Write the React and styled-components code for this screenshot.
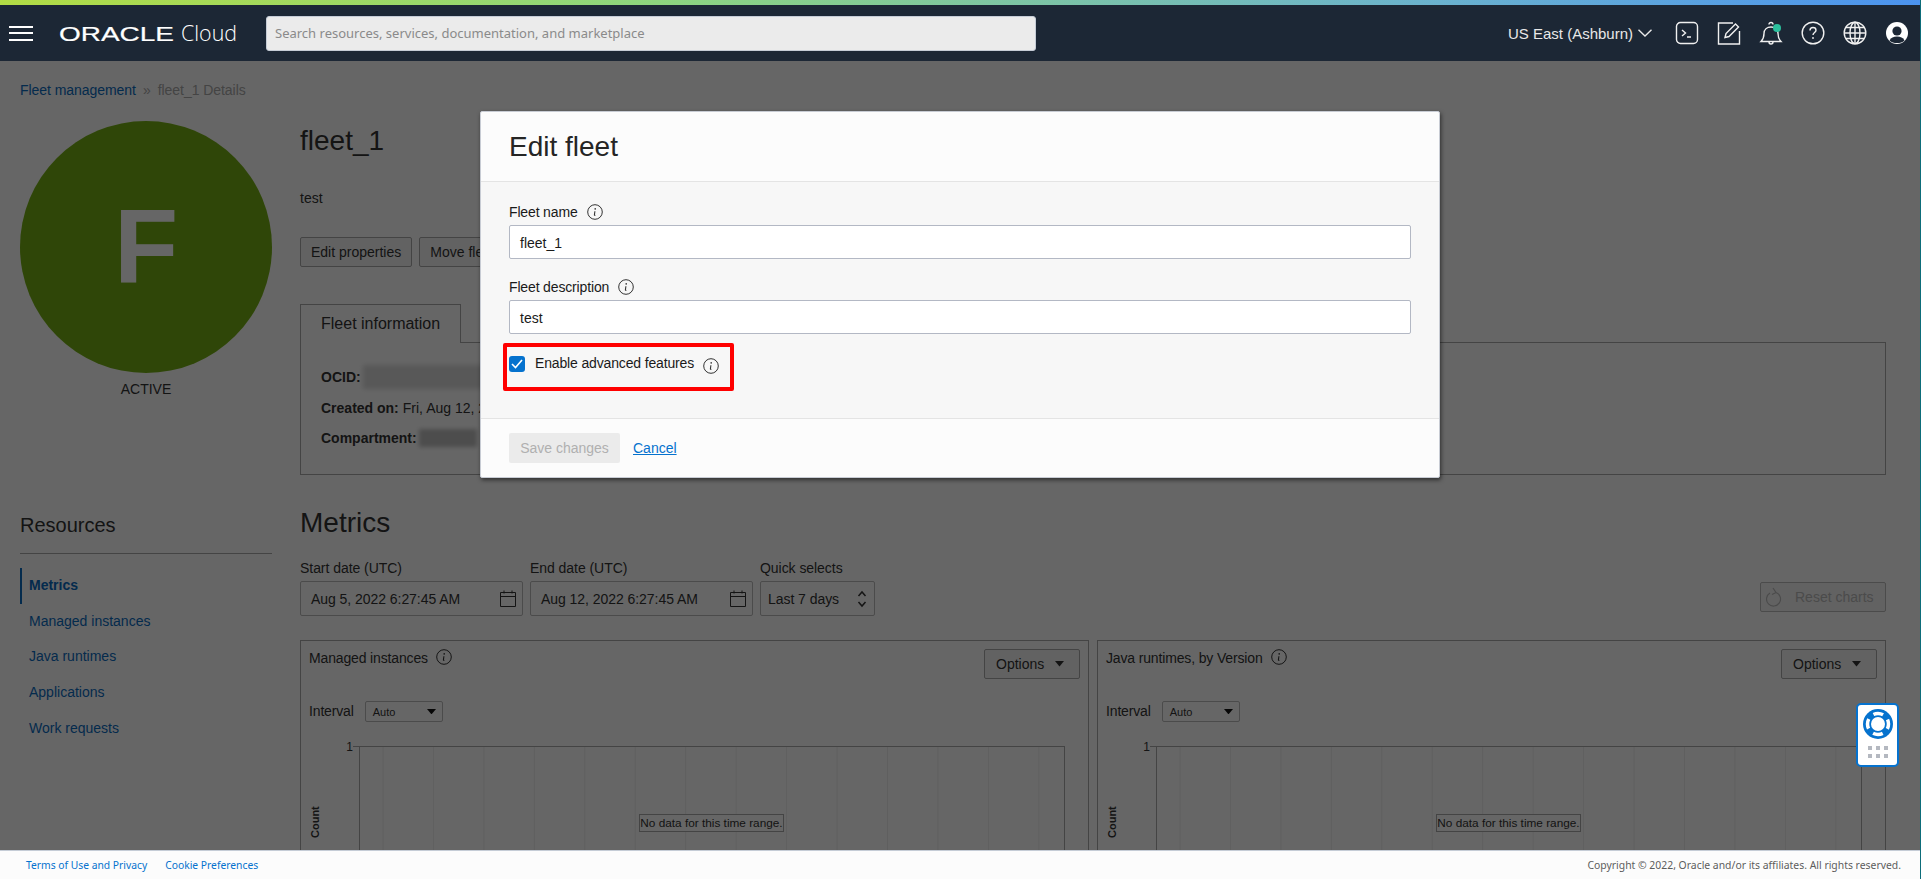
import styled, { createGlobalStyle } from 'styled-components';

const GlobalStyle = createGlobalStyle`
	html, body {
		margin: 0;
		padding: 0;
		height: 100%;
		overflow: hidden;
		background: #fff;
	}
	* {
		box-sizing: border-box;
	}
	body {
		font-family: "Liberation Sans", Arial, sans-serif;
		font-size: 14px;
		color: #333;
	}
`;

const Shell = styled.div`
	position: relative;
	display: flex;
	flex-direction: column;
	width: 100vw;
	height: 100vh;
	overflow: hidden;
	border-right: 1px solid #0d6d7a;
`;

const TopStripe = styled.div`
	height: 5px;
	flex: none;
	background: linear-gradient(90deg, #b2dc45 0%, #8fd67c 33%, #6ab2cf 75%, #4b93ef 100%);
`;

const Header = styled.header`
	display: flex;
	align-items: center;
	flex: none;
	height: 56px;
	padding: 0 11px 0 9px;
	background: #1c2735;
	color: #f0f0f0;
`;

const Burger = styled.div`
	display: flex;
	flex-direction: column;
	justify-content: space-between;
	width: 24px;
	height: 15px;
	margin-right: 27px;

	& > i {
		display: block;
		height: 2px;
		background: #fff;
	}
`;

const LogoText = styled.svg`
	display: block;
	flex: none;
	margin-right: 28px;
	overflow: visible;
`;

const Search = styled.div`
	display: flex;
	align-items: center;
	width: 770px;
	height: 35px;
	padding-left: 8px;
	background: #ebebeb;
	border: 1px solid #c5ccd6;
	border-radius: 3px;
	font-family: "Noto Sans", sans-serif;
	font-size: 13px;
	color: #8a8a8a;
`;

const Region = styled.div`
	display: flex;
	align-items: center;
	gap: 5px;
	margin-left: auto;
	margin-right: 23px;
	font-size: 15px;
	color: #e8e8e8;
`;

const NavIcon = styled.svg`
	display: block;
	flex: none;
	margin-left: ${p => (p.$first ? 0 : 18)}px;
	fill: none;
	stroke: #f0f0f0;
	stroke-width: 1.4;
`;

const Main = styled.main`
	position: relative;
	flex: 1;
	min-height: 0;
	overflow: hidden;
	padding: 19px 0 0 20px;
`;

const Crumbs = styled.div`
	display: flex;
	gap: 7px;
	letter-spacing: -0.05px;
	line-height: 20px;
	color: #aaa;
`;

const Link = styled.a`
	color: #0a6bc0;
	font-weight: ${p => (p.$active ? 700 : 400)};
`;

const Columns = styled.div`
	display: flex;
	gap: 28px;
	margin-top: 21px;
`;

const Aside = styled.aside`
	flex: none;
	width: 252px;
`;

const Avatar = styled.div`
	display: flex;
	align-items: center;
	justify-content: center;
	width: 252px;
	height: 252px;
	border-radius: 50%;
	background: #76b016;
	color: #fff;
	font-size: 105px;
	font-weight: 700;
`;

const Status = styled.div`
	margin-top: 8px;
	text-align: center;
	line-height: 16px;
`;

const SideTitle = styled.h3`
	margin: 116px 0 0;
	padding-bottom: 16px;
	border-bottom: 1px solid #aaa;
	font-size: 20px;
	font-weight: 400;
	line-height: 24px;
`;

const SideNav = styled.nav`
	display: flex;
	flex-direction: column;
	margin-top: 14px;
`;

const SideItem = styled.div`
	height: 35.7px;
	padding-left: 7px;
	line-height: 35.7px;
	border-left: 2px solid ${p => (p.$active ? '#0a6bc0' : 'transparent')};
`;

const Content = styled.div`
	flex: none;
	width: 1586px;
`;

const PageTitle = styled.h1`
	margin: 0;
	font-size: 28px;
	font-weight: 400;
	line-height: 40px;
`;

const Description = styled.p`
	margin: 27px 0 0;
	line-height: 20px;
`;

const ActionRow = styled.div`
	display: flex;
	gap: 7px;
	margin-top: 29px;
`;

const Button = styled.div`
	display: flex;
	align-items: center;
	height: 30px;
	padding: 0 10px;
	border: 1px solid #aaa;
	border-radius: 2px;
	background: #f5f5f5;
	color: #333;
	white-space: nowrap;
`;

const OptionsButton = styled(Button)`
	gap: 11px;
	width: 96px;
	padding: 0 0 0 11px;
`;

const ResetButton = styled(Button)`
	gap: 13px;
	width: 126px;
	margin-left: auto;
	margin-bottom: 4px;
	padding: 0 0 0 5px;
	border-color: #bbb;
	color: #bbb;
`;

const TabBar = styled.div`
	display: flex;
	height: 39px;
	margin-top: 37px;
`;

const Tab = styled.div`
	width: 161px;
	padding-left: 20px;
	border: 1px solid #aaa;
	border-bottom: 0;
	font-size: 16px;
	line-height: 38px;
`;

const TabLine = styled.div`
	flex: 1;
	border-bottom: 1px solid #aaa;
`;

const InfoPanel = styled.div`
	height: 132px;
	padding: 19px 20px 0;
	border: 1px solid #aaa;
	border-top: 0;
`;

const Fact = styled.div`
	display: flex;
	align-items: center;
	gap: 4px;
	height: 30.5px;

	& > b {
		font-weight: 700;
	}
`;

const Redacted = styled.span`
	display: inline-block;
	width: ${p => p.$w}px;
	height: ${p => p.$h}px;
	margin-left: -2px;
	background: ${p => p.$tone || '#ddd'};
	filter: blur(2px);
`;

const SectionTitle = styled.h2`
	margin: 28px 0 0;
	font-size: 28px;
	font-weight: 400;
	line-height: 40px;
`;

const FilterRow = styled.div`
	display: flex;
	align-items: flex-end;
	gap: 7px;
	margin-top: 15px;
`;

const Filter = styled.div`
	display: flex;
	flex-direction: column;
	width: ${p => p.$w}px;
	letter-spacing: -0.05px;

	& > label {
		line-height: 20px;
		margin-bottom: 3px;
	}
`;

const FilterBox = styled.div`
	display: flex;
	align-items: center;
	justify-content: space-between;
	height: 35px;
	padding: 0 5px 0 ${p => p.$left || 10}px;
	border: 1px solid #bbb;
	border-radius: 2px;
	background: #fff;
`;

const ChartGrid = styled.div`
	display: flex;
	gap: 8px;
	margin-top: 24px;
`;

const ChartCard = styled.section`
	width: ${p => p.$w}px;
	height: 330px;
	border: 1px solid #aaa;
`;

const CardHead = styled.div`
	display: flex;
	justify-content: space-between;
	padding: 8px 8px 0;
`;

const CardTitle = styled.div`
	display: flex;
	align-items: flex-start;
	gap: 8px;
	letter-spacing: -0.15px;
	line-height: 18px;
`;

const IntervalRow = styled.div`
	display: flex;
	align-items: center;
	gap: 11px;
	margin: 22px 0 24px;
	padding-left: 8px;
`;

const IntervalLabel = styled.span`
	padding-bottom: 2px;
	letter-spacing: -0.15px;
`;

const MiniSelect = styled.div`
	display: flex;
	align-items: center;
	justify-content: space-between;
	width: 78px;
	height: 21px;
	padding: 0 6px 0 7px;
	border: 1px solid #bbb;
	border-radius: 2px;
	font-size: 11px;
`;

const Plot = styled.div`
	position: relative;
	height: 200px;

	& > svg {
		display: block;
		overflow: visible;
	}
`;

const NoData = styled.div`
	position: absolute;
	left: 338px;
	top: 68px;
	width: 145px;
	height: 18px;
	border: 1px solid #aaa;
	background: #fff;
	font-size: 11.8px;
	line-height: 16px;
	text-align: center;
	white-space: nowrap;
`;

const Scrim = styled.div`
	position: absolute;
	inset: 0;
	display: flex;
	justify-content: center;
	align-items: flex-start;
	padding-top: 50px;
	background: rgba(0, 0, 0, 0.6);
`;

const Modal = styled.div`
	width: 960px;
	border: 1px solid #c8ccd4;
	border-radius: 2px;
	background: #fcfcfc;
	box-shadow: 1px 2px 4px rgba(0, 0, 0, 0.55);
	color: #1a1a1a;
`;

const ModalHead = styled.div`
	height: 70px;
	padding-left: 28px;
	border-bottom: 1px solid #e4e4e4;
	font-size: 28px;
	line-height: 70px;
	color: #252525;
`;

const ModalBody = styled.div`
	padding: 20px 28px 27px;
	background: #f7f7f7;
`;

const FieldLabel = styled.div`
	display: flex;
	align-items: center;
	gap: 9px;
	height: 20px;
	margin-bottom: 3px;
	letter-spacing: -0.15px;
	line-height: 21px;
`;

const TextInput = styled.div`
	height: 34px;
	margin-bottom: ${p => p.$after || 0}px;
	padding-left: 10px;
	border: 1px solid #b3b8c4;
	border-radius: 2px;
	background: #fff;
	line-height: 34px;
`;

const Highlight = styled.div`
	display: flex;
	align-items: flex-start;
	width: 231px;
	height: 48px;
	margin: 9px 0 0 -6px;
	padding: 9px 0 0 2px;
	border: 4px solid #f00;
	border-radius: 2px;
`;

const Check = styled.span`
	display: flex;
	align-items: center;
	justify-content: center;
	flex: none;
	width: 16px;
	height: 16px;
	margin-right: 10px;
	border-radius: 3px;
	background: #0572ce;
`;

const CheckLabel = styled.span`
	margin-right: 9px;
	letter-spacing: -0.15px;
	line-height: 15px;
`;

const CheckHint = styled.span`
	margin-top: 2px;
`;

const ModalFoot = styled.div`
	display: flex;
	align-items: center;
	gap: 13px;
	height: 59px;
	padding: 0 28px 1px;
	border-top: 1px solid #e4e4e4;
`;

const SaveButton = styled.div`
	width: 111px;
	height: 30px;
	border-radius: 2px;
	background: #ebebeb;
	color: #b0b0b0;
	line-height: 30px;
	text-align: center;
`;

const Cancel = styled.a`
	color: #0572ce;
	text-decoration: underline;
`;

const Footer = styled.footer`
	display: flex;
	align-items: center;
	flex: none;
	height: 29px;
	padding: 0 19px 0 26px;
	border-top: 1px solid #c5ccd6;
	background: #fcfcfc;
	font-family: "Noto Sans", sans-serif;
	font-size: 10.3px;
	color: #5c5c5c;

	& > a {
		color: #0572ce;
		margin-right: 18px;
	}
	& > span {
		margin-left: auto;
		font-size: 10.4px;
	}
`;

const HelpWidget = styled.div`
	position: absolute;
	left: 1856px;
	top: 703px;
	display: flex;
	flex-direction: column;
	align-items: center;
	width: 43px;
	height: 64px;
	padding-top: 3px;
	border: 2px solid #0572ce;
	border-radius: 5px;
	background: #fff;
`;

const HelpDots = styled.div`
	display: grid;
	grid-template-columns: repeat(3, 4px);
	gap: 4px;
	margin-top: 6px;

	& > i {
		width: 4px;
		height: 4px;
		background: #b4b8c0;
	}
`;

const InfoIcon = ({ size = 16 }) => (
	<svg width={size} height={size} viewBox="0 0 16 16" fill="none" stroke="#333" style={{ flex: 'none', display: 'block' }}>
		<circle cx="8" cy="8" r="7.3" />
		<path d="M7.9 7.2 7.4 11c0 .4.4.4.9 0" strokeWidth="1.1" />
		<circle cx="8.2" cy="4.9" r=".8" fill="#333" stroke="none" />
	</svg>
);

const Caret = ({ w = 9, color = '#333' }) => (
	<svg width={w} height={w * 0.6} viewBox="0 0 10 6" style={{ flex: 'none' }}>
		<path d="M0 0h10L5 6z" fill={color} />
	</svg>
);

const Calendar = () => (
	<svg width="18" height="17" viewBox="0 0 18 17" fill="none" stroke="#333" style={{ flex: 'none' }}>
		<path d="M1.500 2.500h15v14h-15zM1.500 6.500h15M5 .5v3M13 .5v3" />
	</svg>
);

const UpDown = () => (
	<svg width="10" height="18" viewBox="0 0 10 18" fill="none" stroke="#333" strokeWidth="1.5" style={{ flex: 'none', marginRight: 2 }}>
		<path d="M1.500 6 5 2l3.500 4M1.500 12 5 16l3.500-4" />
	</svg>
);

const Chart = () => {
	const lines = Array.from({ length: 14 }, (_, i) => 82 + i * 50.45);
	return (
		<Plot>
			<svg width="787" height="200">
				{lines.map(x => (
					<line key={x} x1={x} x2={x} y1="0" y2="200" stroke="#eee" />
				))}
				<path d="M52 .5h712M58.500 0v200M763.500 0v200" stroke="#aaa" fill="none" />
				<text x="52" y="5" textAnchor="end" fontSize="12" fill="#333" fontFamily="Liberation Sans">1</text>
				<text x="0" y="0" transform="translate(18 92) rotate(-90)" fontSize="11" fontWeight="700" fill="#333" fontFamily="Liberation Sans">Count</text>
			</svg>
			<NoData>No data for this time range.</NoData>
		</Plot>
	);
};

const MetricCard = ({ title, width }) => (
	<ChartCard $w={width}>
		<CardHead>
			<CardTitle>{title} <InfoIcon /></CardTitle>
			<OptionsButton>Options <Caret /></OptionsButton>
		</CardHead>
		<IntervalRow>
			<IntervalLabel>Interval</IntervalLabel>
			<MiniSelect>Auto <Caret color="#111" /></MiniSelect>
		</IntervalRow>
		<Chart />
	</ChartCard>
);

const sideItems = ['Metrics', 'Managed instances', 'Java runtimes', 'Applications', 'Work requests'];

const App = () => (
	<Shell>
		<GlobalStyle />
		<TopStripe />
		<Header>
			<Burger><i /><i /><i /></Burger>
			<LogoText width="178" height="26" viewBox="0 0 178 26">
				<text x="-1" y="21" fontFamily="Liberation Sans" fontSize="20" fill="#fff" stroke="#fff" strokeWidth=".2" textLength="115" lengthAdjust="spacingAndGlyphs">ORACLE</text>
				<text x="121" y="21" fontFamily="Open Sans" fontWeight="300" fontSize="22" fill="#fff" textLength="56" lengthAdjust="spacingAndGlyphs">Cloud</text>
			</LogoText>
			<Search>Search resources, services, documentation, and marketplace</Search>
			<Region>
				US East (Ashburn)
				<svg width="14" height="8" viewBox="0 0 14 8" fill="none" stroke="#e8e8e8" strokeWidth="1.4">
					<path d="M.5.700 7 7l6.500-6.300" />
				</svg>
			</Region>
			<NavIcon $first width="24" height="24" viewBox="0 0 24 24">
				<rect x="1.500" y="1.500" width="21" height="21" rx="4" />
				<path d="M7 9l3.500 3L7 15M12 16h4" />
			</NavIcon>
			<NavIcon width="24" height="24" viewBox="0 0 24 24">
				<path d="M16 2H1.500v21h21V10" />
				<path d="M8 16.500l1-4L18.500 3l3 3-9.500 9.500z" />
			</NavIcon>
			<NavIcon width="24" height="24" viewBox="0 0 24 24">
				<path d="M2 20.500c2-2 3-3.500 3-8 0-4 3-6.500 7-6.500s7 2.500 7 6.500c0 4.500 1 6 3 8zM10 3.500a2 2 0 0 1 4 0M10 21a2 2 0 0 0 4 0" />
				<circle cx="18" cy="7" r="4" fill="#2bbf9c" stroke="none" />
			</NavIcon>
			<NavIcon width="24" height="24" viewBox="0 0 24 24">
				<circle cx="12" cy="12" r="10.800" />
				<path d="M9 9.500C9 7.500 10.500 6.500 12 6.500c1.800 0 3 1.200 3 2.700 0 2.300-3 2.300-3 4.800" />
				<circle cx="12" cy="17" r=".9" fill="#f0f0f0" stroke="none" />
			</NavIcon>
			<NavIcon width="24" height="24" viewBox="0 0 24 24">
				<circle cx="12" cy="12" r="10.800" />
				<ellipse cx="12" cy="12" rx="5" ry="10.800" />
				<path d="M12 1.200v21.600M1.200 12h21.600M2.700 6.500h18.600M2.700 17.500h18.600" />
			</NavIcon>
			<NavIcon width="24" height="24" viewBox="0 0 24 24">
				<circle cx="12" cy="12" r="11" fill="#fff" stroke="none" />
				<circle cx="12" cy="10" r="4.600" fill="#1c2735" stroke="none" />
				<path d="M4.500 19.500c1.500-3 4-4 7.500-4s6 1 7.500 4c-2 2-4.500 2.500-7.500 2.500s-5.500-.5-7.500-2.500z" fill="#1c2735" stroke="none" />
			</NavIcon>
		</Header>
		<Main>
			<Crumbs>
				<Link>Fleet management</Link>
				<span>»</span>
				<span>fleet_1 Details</span>
			</Crumbs>
			<Columns>
				<Aside>
					<Avatar>F</Avatar>
					<Status>ACTIVE</Status>
					<SideTitle>Resources</SideTitle>
					<SideNav>
						{sideItems.map((item, i) => (
							<SideItem key={item} $active={i === 0}>
								<Link $active={i === 0}>{item}</Link>
							</SideItem>
						))}
					</SideNav>
				</Aside>
				<Content>
					<PageTitle>fleet_1</PageTitle>
					<Description>test</Description>
					<ActionRow>
						<Button>Edit properties</Button>
						<Button>Move fleet</Button>
					</ActionRow>
					<TabBar>
						<Tab>Fleet information</Tab>
						<TabLine />
					</TabBar>
					<InfoPanel>
						<Fact><b>OCID:</b> <Redacted $w={200} $h={24} /></Fact>
						<Fact><b>Created on:</b> Fri, Aug 12, 2022</Fact>
						<Fact><b>Compartment:</b> <Redacted $w={58} $h={18} $tone="#c0c0c0" /></Fact>
					</InfoPanel>
					<SectionTitle>Metrics</SectionTitle>
					<FilterRow>
						<Filter $w={223}>
							<label>Start date (UTC)</label>
							<FilterBox>Aug 5, 2022 6:27:45 AM <Calendar /></FilterBox>
						</Filter>
						<Filter $w={223}>
							<label>End date (UTC)</label>
							<FilterBox>Aug 12, 2022 6:27:45 AM <Calendar /></FilterBox>
						</Filter>
						<Filter $w={115}>
							<label>Quick selects</label>
							<FilterBox $left={7}>Last 7 days <UpDown /></FilterBox>
						</Filter>
						<ResetButton>
							<svg width="16" height="20" viewBox="0 0 16 20" fill="none" stroke="#bbb" strokeWidth="1.200">
								<path d="M10 5.500a7 7 0 1 1-6 .5M7 1l3 4.500-4 2" />
							</svg>
							Reset charts
						</ResetButton>
					</FilterRow>
					<ChartGrid>
						<MetricCard title="Managed instances" width={789} />
						<MetricCard title="Java runtimes, by Version" width={789} />
					</ChartGrid>
				</Content>
			</Columns>
			<Scrim>
				<Modal>
					<ModalHead>Edit fleet</ModalHead>
					<ModalBody>
						<FieldLabel>Fleet name <InfoIcon /></FieldLabel>
						<TextInput $after={18}>fleet_1</TextInput>
						<FieldLabel>Fleet description <InfoIcon /></FieldLabel>
						<TextInput>test</TextInput>
						<Highlight>
							<Check>
								<svg width="12" height="10" viewBox="0 0 12 10" fill="none" stroke="#fff" strokeWidth="1.600">
									<path d="M1 5l3.500 3.500L11 1" />
								</svg>
							</Check>
							<CheckLabel>Enable advanced features</CheckLabel>
							<CheckHint><InfoIcon /></CheckHint>
						</Highlight>
					</ModalBody>
					<ModalFoot>
						<SaveButton>Save changes</SaveButton>
						<Cancel>Cancel</Cancel>
					</ModalFoot>
				</Modal>
			</Scrim>
		</Main>
		<Footer>
			<a>Terms of Use and Privacy</a>
			<a>Cookie Preferences</a>
			<span>Copyright © 2022, Oracle and/or its affiliates. All rights reserved.</span>
		</Footer>
		<HelpWidget>
			<svg width="32" height="32" viewBox="0 0 32 32">
				<circle cx="16" cy="16" r="15" fill="#0572ce" />
				<circle cx="16" cy="16" r="10.500" fill="none" stroke="#fff" strokeWidth="3.500" strokeDasharray="10 6.490" strokeDashoffset="-11.500" />
				<circle cx="16" cy="16" r="7" fill="#fff" />
			</svg>
			<HelpDots><i /><i /><i /><i /><i /><i /></HelpDots>
		</HelpWidget>
	</Shell>
);

export default App;
